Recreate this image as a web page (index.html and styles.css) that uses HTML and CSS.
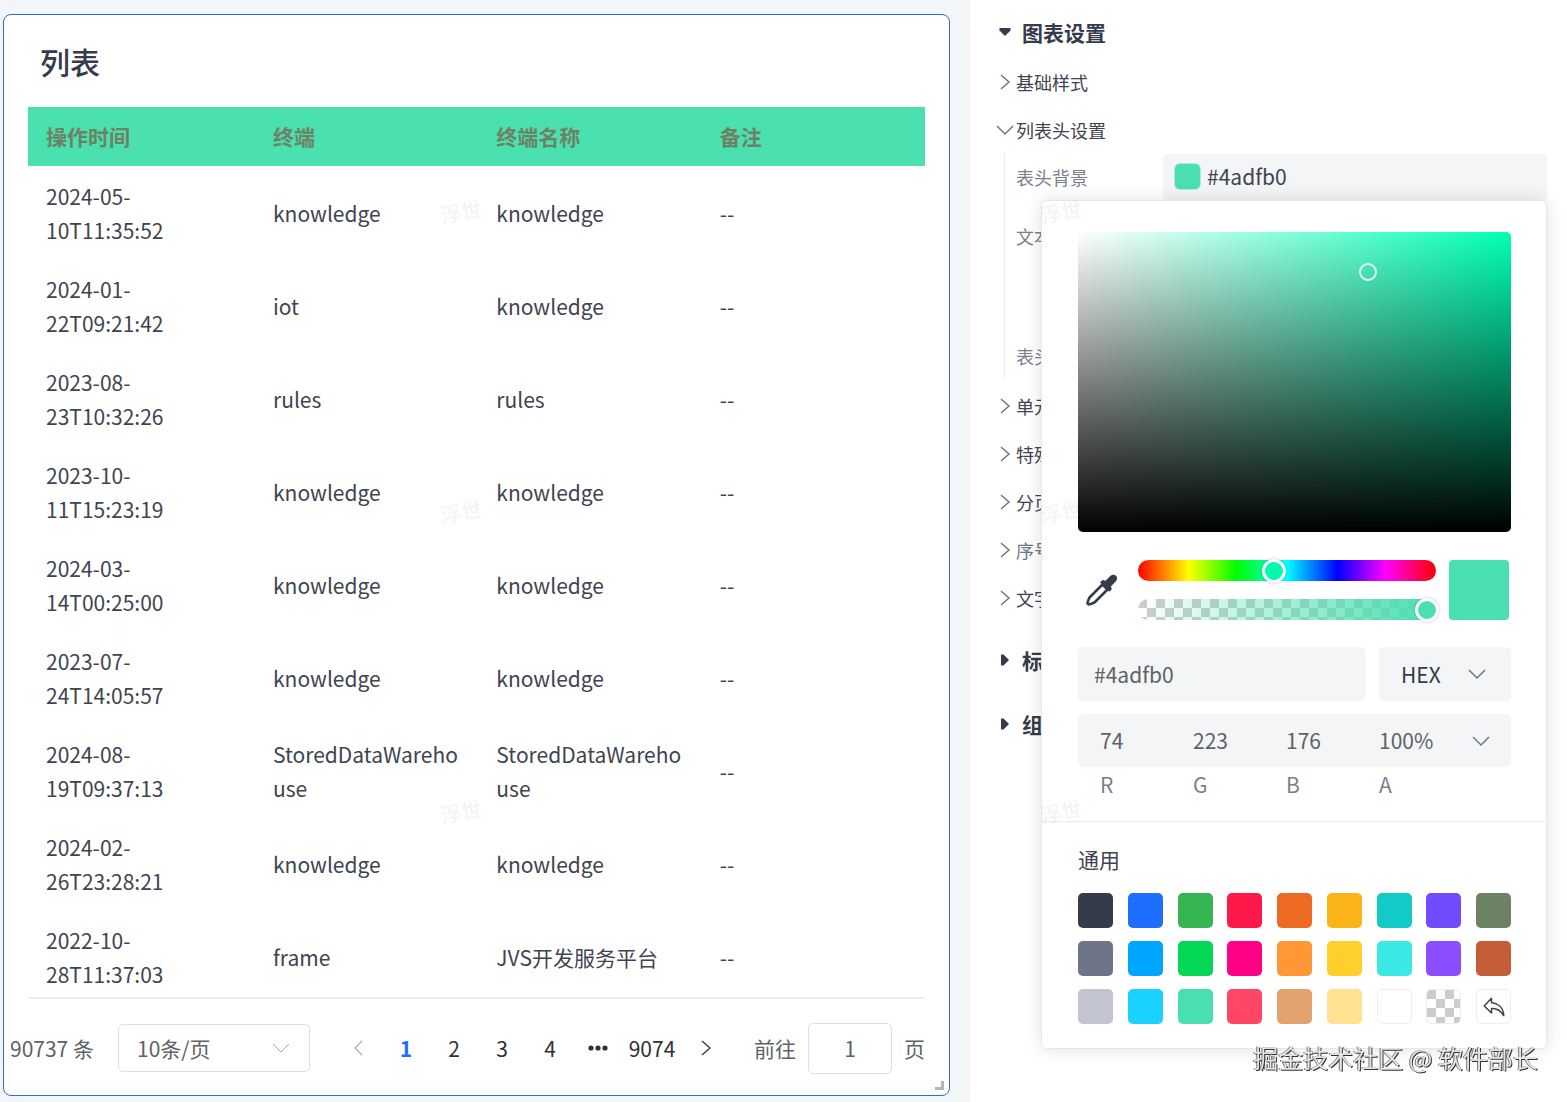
FILE: index.html
```html
<!DOCTYPE html>
<html lang="zh-CN">
<head>
<meta charset="utf-8">
<meta name="viewport" content="width=device-width, initial-scale=1">
<title>图表设置</title>
<link rel="stylesheet" href="styles.css">
</head>
<body>
<svg class="sprite" aria-hidden="true">
  <symbol id="right" viewBox="0 0 18 18"><path d="M5 2l8 7-8 7" fill="none" stroke="currentColor"/></symbol>
  <symbol id="left" viewBox="0 0 18 18"><path d="M13 2L6 9l7 7" fill="none" stroke="currentColor"/></symbol>
  <symbol id="down" viewBox="0 0 18 18"><path d="M1 5l8 8 8-8" fill="none" stroke="currentColor"/></symbol>
  <symbol id="caret" viewBox="0 0 18 18"><path d="M5 3.500h2.500L13 9l-5.500 5.500H5z" fill="currentColor"/></symbol>
</svg>
<div class="layout">
  <main class="canvas">
    <section class="card">
      <h1 class="card-title">列表</h1>
      <div class="table-box">
        <table class="table">
          <thead><tr><th class="col-time">操作时间</th><th>终端</th><th>终端名称</th><th>备注</th></tr></thead>
          <tbody>
            <tr><td>2024-05-10T11:35:52</td><td>knowledge</td><td>knowledge</td><td>--</td></tr>
            <tr><td>2024-01-22T09:21:42</td><td>iot</td><td>knowledge</td><td>--</td></tr>
            <tr><td>2023-08-23T10:32:26</td><td>rules</td><td>rules</td><td>--</td></tr>
            <tr><td>2023-10-11T15:23:19</td><td>knowledge</td><td>knowledge</td><td>--</td></tr>
            <tr><td>2024-03-14T00:25:00</td><td>knowledge</td><td>knowledge</td><td>--</td></tr>
            <tr><td>2023-07-24T14:05:57</td><td>knowledge</td><td>knowledge</td><td>--</td></tr>
            <tr><td>2024-08-19T09:37:13</td><td>StoredDataWarehouse</td><td>StoredDataWarehouse</td><td>--</td></tr>
            <tr><td>2024-02-26T23:28:21</td><td>knowledge</td><td>knowledge</td><td>--</td></tr>
            <tr><td>2022-10-28T11:37:03</td><td>frame</td><td>JVS开发服务平台</td><td>--</td></tr>
          </tbody>
        </table>
      </div>
      <nav class="pager" aria-label="分页">
        <span class="total">90737 条</span>
        <span class="select page-size">
          <select aria-label="每页条数"><option>10条/页</option></select>
          <svg class="icon"><use href="#down"/></svg>
        </span>
        <div class="pages">
          <button class="page muted" type="button" aria-label="上一页"><svg class="icon"><use href="#left"/></svg></button>
          <button class="page current" type="button">1</button>
          <button class="page" type="button">2</button>
          <button class="page" type="button">3</button>
          <button class="page" type="button">4</button>
          <button class="page" type="button" aria-label="更多"><svg class="icon-dots" viewBox="0 0 20 6"><circle cx="3" cy="3" r="2.600"/><circle cx="10" cy="3" r="2.600"/><circle cx="17" cy="3" r="2.600"/></svg></button>
          <button class="page last" type="button">9074</button>
          <button class="page" type="button" aria-label="下一页"><svg class="icon"><use href="#right"/></svg></button>
        </div>
        <label class="jump">前往<input type="text" value="1">页</label>
      </nav>
      <span class="resize"></span>
    </section>
  </main>

  <aside class="panel">
    <h2 class="heading"><svg class="icon open"><use href="#caret"/></svg>图表设置</h2>
    <div class="items">
      <button class="item" type="button"><svg class="icon"><use href="#right"/></svg>基础样式</button>
      <button class="item" type="button"><svg class="icon"><use href="#down"/></svg>列表头设置</button>
      <div class="group">
        <div class="field">
          <span class="field-label">表头背景</span>
          <div class="field-control">
            <button class="color-button" type="button"><span class="chip"></span>#4adfb0</button>
            <div class="popover">
              <div class="picker">
                <div class="saturation"><span class="cursor"></span></div>
                <div class="sliders">
                  <button class="dropper" type="button" aria-label="吸管">
                    <svg viewBox="0 0 32 32"><path d="M16.500 10.500l5 5L9 28c-1.500 1.500-3.500 1.200-5.500 2.300-1.300.4-2.300-.8-1.900-2C2.600 26 2.500 24.500 4 23z" fill="none" stroke="currentColor" stroke-width="2.600" stroke-linejoin="round"/><path d="M14 8.500l2.500-2.500 3 .8 4.500-4.500c2-2 4.500-2 6-.5s1.500 4-.5 6L25 12.300l.8 3-2.500 2.500z" fill="currentColor"/></svg>
                  </button>
                  <div class="tracks">
                    <div class="track hue"><input type="range" min="0" max="360" value="163" aria-label="色相"></div>
                    <div class="track alpha"><input type="range" min="0" max="100" value="100" aria-label="透明度"></div>
                  </div>
                  <span class="preview"></span>
                </div>
                <div class="value-row">
                  <input class="hex" type="text" value="#4adfb0" aria-label="颜色值">
                  <span class="select mode">
                    <select aria-label="颜色格式"><option>HEX</option></select>
                    <svg class="icon"><use href="#down"/></svg>
                  </span>
                </div>
                <div class="rgba">
                  <input id="r" type="text" value="74"><input id="g" type="text" value="223"><input id="b" type="text" value="176"><input id="a" type="text" value="100%">
                  <svg class="icon"><use href="#down"/></svg>
                </div>
                <div class="rgba-labels"><label for="r">R</label><label for="g">G</label><label for="b">B</label><label for="a">A</label></div>
              </div>
              <div class="presets">
                <h3 class="presets-title">通用</h3>
                <div class="swatches">
                  <button type="button" class="swatch c1" aria-label="#363b4c"></button>
                  <button type="button" class="swatch c2" aria-label="#1e6fff"></button>
                  <button type="button" class="swatch c3" aria-label="#36b452"></button>
                  <button type="button" class="swatch c4" aria-label="#ff194b"></button>
                  <button type="button" class="swatch c5" aria-label="#ee6a23"></button>
                  <button type="button" class="swatch c6" aria-label="#fab41a"></button>
                  <button type="button" class="swatch c7" aria-label="#12cac8"></button>
                  <button type="button" class="swatch c8" aria-label="#724bff"></button>
                  <button type="button" class="swatch c9" aria-label="#6d8264"></button>
                  <button type="button" class="swatch c10" aria-label="#6f7588"></button>
                  <button type="button" class="swatch c11" aria-label="#00a5ff"></button>
                  <button type="button" class="swatch c12" aria-label="#04d655"></button>
                  <button type="button" class="swatch c13" aria-label="#ff0086"></button>
                  <button type="button" class="swatch c14" aria-label="#ff9736"></button>
                  <button type="button" class="swatch c15" aria-label="#ffd02b"></button>
                  <button type="button" class="swatch c16" aria-label="#3ae8e4"></button>
                  <button type="button" class="swatch c17" aria-label="#8a4dff"></button>
                  <button type="button" class="swatch c18" aria-label="#c65d39"></button>
                  <button type="button" class="swatch c19" aria-label="#c2c5cf"></button>
                  <button type="button" class="swatch c20" aria-label="#1bd1ff"></button>
                  <button type="button" class="swatch c21" aria-label="#4adfb0"></button>
                  <button type="button" class="swatch c22" aria-label="#ff4667"></button>
                  <button type="button" class="swatch c23" aria-label="#e1a270"></button>
                  <button type="button" class="swatch c24" aria-label="#fee191"></button>
                  <button type="button" class="swatch outlined" aria-label="#ffffff"></button>
                  <button type="button" class="swatch outlined checker" aria-label="透明"></button>
                  <button type="button" class="swatch outlined" aria-label="还原"><svg class="icon-undo" viewBox="0 0 22 20"><path d="M8.500 1.200L1.200 9l7.300 7v-4.500c5-.5 9 2 12.200 7C20.500 11 15.500 6.500 8.500 5.800z" fill="none" stroke="currentColor" stroke-width="1.500" stroke-linejoin="round"/></svg></button>
                </div>
              </div>
            </div>
          </div>
        </div>
        <div class="field tall"><span class="field-label">文本</span></div>
        <div class="field"><span class="field-label">表头</span></div>
      </div>
      <button class="item" type="button"><svg class="icon"><use href="#right"/></svg>单元</button>
      <button class="item" type="button"><svg class="icon"><use href="#right"/></svg>特殊</button>
      <button class="item" type="button"><svg class="icon"><use href="#right"/></svg>分页</button>
      <button class="item dim" type="button"><svg class="icon"><use href="#right"/></svg>序号</button>
      <button class="item" type="button"><svg class="icon"><use href="#right"/></svg>文字</button>
    </div>
    <h2 class="heading"><svg class="icon"><use href="#caret"/></svg>标题</h2>
    <h2 class="heading spaced"><svg class="icon"><use href="#caret"/></svg>组件</h2>
  </aside>
</div>
<div class="marks" aria-hidden="true">
  <span>浮世</span><span>浮世</span><span>浮世</span><span>浮世</span><span>浮世</span><span>浮世</span>
</div>
<p class="credit">掘金技术社区 @ 软件部长</p>
</body>
</html>
```
FILE: styles.css
```css
* { box-sizing: border-box; }

body {
  margin: 0;
  font-family: "Noto Sans CJK SC", sans-serif;
  font-size: 21px;
  line-height: 34px;
  color: #40444f;
  background: #fff;
}

button, input, select {
  font: inherit;
  color: inherit;
  margin: 0;
  padding: 0;
  border: 0;
  background: none;
  outline: 0;
  appearance: none;
}

h1, h2, h3, p { margin: 0; }

.sprite { display: none; }
.icon { width: 18px; height: 18px; flex: none; display: block; stroke-width: 1.5; }

.layout {
  display: grid;
  grid-template-columns: minmax(0, 970fr) minmax(0, 597fr);
  height: 100vh;
  min-height: 800px;
}

/* Canvas with the list card */
.canvas {
  display: flex;
  min-height: 0;
  padding: 14px 20px 6px 3px;
  background: #f3f6f8;
}

.card {
  position: relative;
  flex: 1;
  min-width: 0;
  display: flex;
  flex-direction: column;
  background: #fff;
  border: 1px solid #2c6fd0;
  border-radius: 8px;
}

.card-title {
  padding: 24px 36px;
  font-size: 30px;
  line-height: 44px;
  font-weight: 500;
  color: #363b4c;
}

.table-box {
  flex: 1;
  min-height: 0;
  overflow: hidden;
  margin: 0 24px;
  border-bottom: 2px solid #ebeef5;
}

.table { width: 100%; table-layout: fixed; border-collapse: collapse; }
.table th, .table td { padding: 0 18px; text-align: left; vertical-align: middle; overflow-wrap: anywhere; }
.table th { height: 59px; padding-bottom: 2px; background: #4ae0b0; color: #6d8264; font-weight: 700; }
.table td { height: 93px; }
.col-time { width: 227px; }

.pager {
  display: flex;
  align-items: center;
  justify-content: space-between;
  height: 96px;
  padding: 2px 24px 0 6px;
  color: #606266;
}

.select { position: relative; display: flex; align-items: center; }
.select select { width: 100%; height: 100%; }
.select .icon { position: absolute; pointer-events: none; }

.page-size { width: 192px; height: 48px; border: 1px solid #dcdfe6; border-radius: 5px; }
.page-size select { padding-left: 18px; }
.page-size .icon { right: 19px; color: #a8abb2; stroke-width: 1; }

.pages { display: flex; align-items: center; color: #303133; }
.page { display: flex; align-items: center; justify-content: center; width: 48px; height: 48px; }
.page.last { width: 60px; }
.page.muted { color: #a8abb2; }
.page.current { color: #1e6fff; font-weight: 700; }
.page .icon { stroke-width: 1.2; }
.icon-dots { width: 20px; height: 6px; fill: currentColor; }

.jump { display: flex; align-items: center; gap: 12px; }
.jump input { width: 84px; height: 51px; border: 1px solid #dcdfe6; border-radius: 5px; text-align: center; }

.resize {
  position: absolute;
  right: 5px;
  bottom: 5px;
  width: 9px;
  height: 9px;
  border: solid #b4b4b4;
  border-width: 0 3px 3px 0;
}

/* Settings panel */
.panel { padding: 6px 20px 0 26px; }

.heading {
  display: flex;
  align-items: center;
  gap: 8px;
  height: 52px;
  padding-bottom: 1px;
  font-size: 21px;
  font-weight: 700;
  color: #363b4c;
}
.heading .open { transform: rotate(90deg); }
.heading.spaced { margin-top: 12px; }

.items { padding-bottom: 12px; }
.item { display: flex; align-items: center; gap: 2px; width: 100%; height: 48px; font-size: 18px; }
.item.dim { color: #6f7588; }
.item .icon { color: #6f7588; }

.group {
  display: flex;
  flex-direction: column;
  gap: 14px;
  margin: 0 0 4px 8px;
  padding-left: 11px;
  border-left: 1px solid #e8eaee;
}
.field { display: flex; align-items: center; height: 46px; }
.field:last-child { height: 44px; }
.field.tall { height: 106px; align-items: flex-start; padding-top: 5px; }
.field-label { width: 147px; flex: none; font-size: 18px; color: #7a7f8e; }
.field-control { position: relative; flex: 1; }
.color-button {
  display: flex;
  align-items: center;
  gap: 7px;
  width: 100%;
  height: 46px;
  padding: 0 0 2px 12px;
  border-radius: 4px;
  background: #f3f5f7;
}
.chip { width: 25px; height: 25px; border-radius: 5px; background: #4adfb0; box-shadow: 0 0 0 1px #b9e6d8; }

/* Color picker popover */
.popover {
  position: absolute;
  z-index: 2;
  top: 100%;
  right: 0;
  width: 506px;
  background: #fff;
  border: 1px solid #e4e7ed;
  border-radius: 5px;
  box-shadow: 0 0 18px rgba(0, 0, 0, 0.12);
}
.picker { padding: 31px 35px 20px 36px; border-bottom: 1px solid #e8eaee; }

.saturation {
  position: relative;
  height: 300px;
  border-radius: 5px;
  background: linear-gradient(to top, #000, rgba(0, 0, 0, 0)), linear-gradient(to right, #fff, #00ffb4);
}
.cursor {
  position: absolute;
  left: 67%;
  top: 13.300%;
  width: 18px;
  height: 18px;
  margin: -9px;
  border: 2px solid #d8fff2;
  border-radius: 50%;
}

.sliders { display: flex; align-items: center; margin-top: 28px; height: 60px; }
.dropper { width: 47px; margin: 0 5px 0 8px; height: 32px; color: #363b4c; }
.dropper svg { display: block; width: 32px; height: 32px; }
.tracks { flex: 1; display: flex; flex-direction: column; gap: 18px; }
.track { height: 21px; border-radius: 11px; }
.hue { background: linear-gradient(to right, #f00, #ff0 17%, #0f0 33%, #0ff 50%, #00f 67%, #f0f 83%, #f00); }
.alpha {
  background:
    linear-gradient(to right, rgba(74, 223, 176, 0), #4adfb0),
    conic-gradient(#fff 25%, #ccc 0 50%, #fff 0 75%, #ccc 0) 0 0 / 18px 18px;
}
.track input { display: block; width: calc(100% + 6px); height: 21px; margin: 0 -3px; }
.track input::-webkit-slider-thumb {
  appearance: none;
  width: 24px;
  height: 24px;
  border: 3px solid #fff;
  border-radius: 50%;
  background: #00f8af;
  box-shadow: 0 0 3px rgba(0, 0, 0, 0.25);
}
.alpha input::-webkit-slider-thumb { background: #4adfb0; }
.preview { width: 60px; height: 60px; margin: 0 2px 0 13px; border-radius: 4px; background: #4adfb0; }

.value-row { display: flex; gap: 13px; margin-top: 27px; color: #606266; }
.hex { flex: 1; min-width: 0; height: 54px; padding: 0 16px; border-radius: 5px; background: #f3f5f7; }
.mode { width: 132px; height: 54px; border-radius: 5px; background: #f3f5f7; color: #363b4c; }
.mode select { padding-left: 22px; }
.mode .icon { right: 25px; color: #6f7588; }

.rgba {
  display: flex;
  align-items: center;
  height: 53px;
  margin-top: 13px;
  padding-left: 22px;
  border-radius: 5px;
  background: #f3f5f7;
  color: #606266;
}
.rgba input { width: 93px; height: 100%; padding-bottom: 2px; }
.rgba .icon { color: #6f7588; }
.rgba-labels { display: flex; padding-left: 22px; color: #7a7f8e; }
.rgba-labels label { width: 93px; }

.presets { padding: 20px 35px 24px 36px; }
.presets-title { font-size: 21px; font-weight: 400; }
.swatches {
  display: grid;
  grid-template-columns: repeat(9, 35px);
  justify-content: space-between;
  row-gap: 13px;
  margin-top: 17px;
}
.swatch { display: flex; align-items: center; justify-content: center; height: 35px; border-radius: 5px; }
.outlined { border: 1px solid #eceef1; }
.checker { background: conic-gradient(#fff 25%, #ccc 0 50%, #fff 0 75%, #ccc 0) 0 0 / 18px 18px; }
.icon-undo { width: 22px; height: 20px; }

.c1 { background: #363b4c; }
.c2 { background: #1e6fff; }
.c3 { background: #36b452; }
.c4 { background: #ff194b; }
.c5 { background: #ee6a23; }
.c6 { background: #fab41a; }
.c7 { background: #12cac8; }
.c8 { background: #724bff; }
.c9 { background: #6d8264; }
.c10 { background: #6f7588; }
.c11 { background: #00a5ff; }
.c12 { background: #04d655; }
.c13 { background: #ff0086; }
.c14 { background: #ff9736; }
.c15 { background: #ffd02b; }
.c16 { background: #3ae8e4; }
.c17 { background: #8a4dff; }
.c18 { background: #c65d39; }
.c19 { background: #c2c5cf; }
.c20 { background: #1bd1ff; }
.c21 { background: #4adfb0; }
.c22 { background: #ff4667; }
.c23 { background: #e1a270; }
.c24 { background: #fee191; }

/* Repeated watermark over the whole page */
.marks {
  position: fixed;
  z-index: 3;
  inset: 0;
  overflow: hidden;
  pointer-events: none;
  display: grid;
  grid-template-columns: repeat(2, 600px);
  grid-auto-rows: 300px;
  padding: 194px 0 0 440px;
  color: rgba(0, 0, 0, 0.04);
}
.marks span { justify-self: start; align-self: start; font-weight: 700; transform: rotate(-10deg); }

.credit {
  position: fixed;
  z-index: 4;
  right: 29px;
  bottom: 28px;
  font-size: 25px;
  color: #e4e4e4;
  text-shadow: 1px 1px 0 #333, -1px 0 0 #777;
}
```
